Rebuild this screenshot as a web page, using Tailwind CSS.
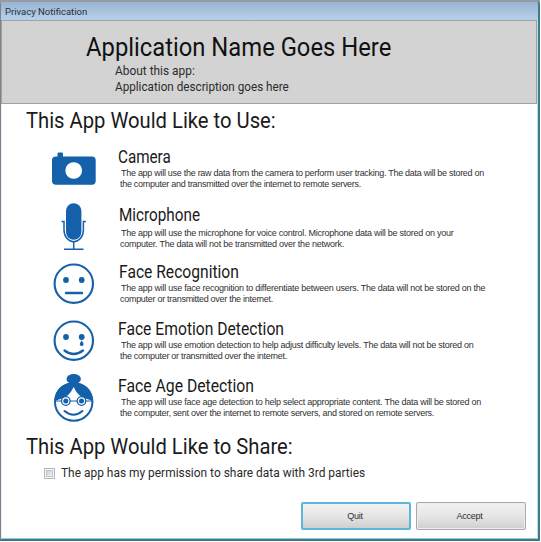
<!DOCTYPE html>
<html lang="en">
<head>
<meta charset="utf-8">
<title>Privacy Notification</title>
<script src="https://cdn.jsdelivr.net/npm/@tailwindcss/browser@4"></script>
</head>
<body class="w-[541px] h-[542px] overflow-hidden bg-white font-[Roboto,sans-serif] text-[#1a1a1a] whitespace-nowrap">
<div class="w-[540px] h-[541px] flex flex-col bg-[#9b9b9b]">
  <div class="h-px shrink-0"></div>
  <div class="flex-1 flex flex-col rounded-t-[4px] border-l border-r-2 border-b-2 border-l-[#7b848c] border-r-[#3f7c86] border-b-[#46757d] bg-[#b9d1ea] overflow-hidden">
    <div class="h-[19px] shrink-0 pl-1 border-t border-[#8d9aa8] bg-linear-to-b from-[#98b4d2] to-[#b8d0ea] text-[9.5px] leading-[19px] text-[#26303c]">Privacy Notification</div>
    <div class="flex-1 flex flex-col bg-white border-r border-b border-r-[#b5e3f4] border-b-[#7fd3e8] border-l border-l-[#e8eef4]">
      <header class="h-[84px] shrink-0 -ml-px border border-[#9fa1a3] bg-[#d3d3d3] pt-[11px] pl-[84px] flex flex-col items-start">
        <h1 class="text-[26px] leading-[30px] origin-left scale-x-[.915] text-[#111]">Application Name Goes Here</h1>
        <p class="ml-[29px] mt-px text-[13.3px] leading-[16px] origin-left scale-x-[.895] text-[#2b2b2b]">About this app:</p>
        <p class="ml-[29px] text-[13.3px] leading-[16px] origin-left scale-x-[.88] text-[#2b2b2b]">Application description goes here</p>
      </header>
      <h2 class="mt-[3px] ml-[24px] h-[26px] self-start text-[22.5px] leading-[26px] origin-left scale-x-[.898]">This App Would Like to Use:</h2>

      <section class="mt-[14px] ml-[50px] h-[57px] shrink-0 flex">
        <svg class="w-[66px] h-[57px] shrink-0" viewBox="0 0 66 57" fill="#1460aa"><path fill-rule="evenodd" d="M4 9.500H5.500V6.500Q5.500 5.500 6.500 5.500H10Q11 5.500 11 6.500V9.500H40Q43.700 9.500 43.700 13V34Q43.700 37.700 40 37.700H4Q0 37.700 0 34V13Q0 9.500 4 9.500ZM21.700 15.200a8.300 8.300 0 1 0 .01 0Z"/></svg>
        <div class="flex flex-col items-start">
          <h3 class="text-[17.5px] leading-[20px] origin-left scale-x-[.87]">Camera</h3>
          <p class="mt-[1px] pl-[3px] font-[Liberation_Sans,sans-serif] text-[9px] leading-[10.5px] text-[#303030] tracking-[-.281px]">The app will use the raw data from the camera to perform user tracking. The data will be stored on</p>
          <p class="pl-[2px] font-[Liberation_Sans,sans-serif] text-[9px] leading-[10.5px] text-[#303030] tracking-[-.287px]">the computer and transmitted over the internet to remote servers.</p>
        </div>
      </section>

      <section class="ml-[50px] h-[58px] shrink-0 flex">
        <svg class="w-[66px] h-[58px] shrink-0 overflow-visible" viewBox="0 1 66 58" fill="none" stroke="#1460aa"><rect x="14" y="0.300" width="15.400" height="36.500" rx="7.700" fill="#1460aa" stroke="none"/><path stroke-width="1.500" d="M9.500 18.500h2.500V27a9.700 11.700 0 0 0 19.400 0V18.500h2.500M21.700 38.700V46M12 46.300H31.500"/></svg>
        <div class="flex flex-col items-start">
          <h3 class="mt-[1px] ml-px text-[17.5px] leading-[20px] origin-left scale-x-[.873]">Microphone</h3>
          <p class="mt-[3px] pl-[3px] font-[Liberation_Sans,sans-serif] text-[9px] leading-[10.5px] text-[#303030] tracking-[-.256px]">The app will use the microphone for voice control. Microphone data will be stored on your</p>
          <p class="pl-[2px] font-[Liberation_Sans,sans-serif] text-[9px] leading-[10.5px] text-[#303030] tracking-[-.241px]">computer. The data will not be transmitted over the network.</p>
        </div>
      </section>

      <section class="ml-[50px] h-[57px] shrink-0 flex">
        <svg class="w-[66px] h-[57px] shrink-0" viewBox="0 0 66 57" fill="none" stroke="#1460aa"><circle cx="21.800" cy="21.700" r="19.200" stroke-width="2.100"/><g fill="#1460aa" stroke="none"><circle cx="14" cy="18" r="2.900"/><circle cx="29.700" cy="18" r="2.900"/></g><path d="M14 31H30" stroke-width="2.400" stroke-linecap="round"/></svg>
        <div class="flex flex-col items-start">
          <h3 class="ml-px text-[17.5px] leading-[20px] origin-left scale-x-[.893]">Face Recognition</h3>
          <p class="mt-[1px] pl-[3px] font-[Liberation_Sans,sans-serif] text-[9px] leading-[10.5px] text-[#303030] tracking-[-.251px]">The app will use face recognition to differentiate between users. The data will not be stored on the</p>
          <p class="pl-[2px] font-[Liberation_Sans,sans-serif] text-[9px] leading-[10.5px] text-[#303030] tracking-[-.288px]">computer or transmitted over the internet.</p>
        </div>
      </section>

      <section class="ml-[50px] h-[57px] shrink-0 flex">
        <svg class="w-[66px] h-[57px] shrink-0" viewBox="0 0 66 57" fill="none" stroke="#1460aa"><circle cx="21.800" cy="21.700" r="19.200" stroke-width="2.100"/><g fill="#1460aa" stroke="none"><circle cx="14" cy="18" r="2.900"/><circle cx="29.700" cy="18" r="2.900"/><path d="M29.700 21.500l1.600 2.600a1.900 1.900 0 1 1-3.200 0Z"/></g><path d="M12.500 31.500Q21.700 38.500 31 31.500" stroke-width="2.200" stroke-linecap="round"/></svg>
        <div class="flex flex-col items-start">
          <h3 class="text-[17.5px] leading-[20px] origin-left scale-x-[.895]">Face Emotion Detection</h3>
          <p class="mt-[1px] pl-[3px] font-[Liberation_Sans,sans-serif] text-[9px] leading-[10.5px] text-[#303030] tracking-[-.256px]">The app will use emotion detection to help adjust difficulty levels. The data will not be stored on</p>
          <p class="pl-[2px] font-[Liberation_Sans,sans-serif] text-[9px] leading-[10.5px] text-[#303030] tracking-[-.285px]">the computer or transmitted over the internet.</p>
        </div>
      </section>

      <section class="ml-[50px] h-[57px] shrink-0 flex">
        <svg class="w-[66px] h-[57px] shrink-0 overflow-visible" viewBox="0 -1 66 57" fill="none" stroke="#1460aa"><circle cx="21.700" cy="25" r="18.700" stroke-width="2"/><g fill="#1460aa" stroke="none"><ellipse cx="21.700" cy="2" rx="7.200" ry="5"/><path d="M2.500 24C3 12 11 5.500 21.700 5.500S40.500 12 41 24L35 22Q26 20 21.700 10Q17 20 8.500 22Z"/></g><circle cx="13.800" cy="24" r="4.300" fill="#fff" stroke-width="1.300"/><circle cx="29.500" cy="24" r="4.300" fill="#fff" stroke-width="1.300"/><g fill="#1460aa" stroke="none"><circle cx="13.800" cy="24" r="2.500"/><circle cx="29.500" cy="24" r="2.500"/></g><path d="M18.100 24h7.100M3 24h6.500M33.800 24H40.500" stroke-width="1"/><path d="M12.500 34Q21.700 41.500 30.500 34" stroke-width="2" stroke-linecap="round"/></svg>
        <div class="flex flex-col items-start">
          <h3 class="text-[17.5px] leading-[20px] origin-left scale-x-[.9]">Face Age Detection</h3>
          <p class="mt-[1px] pl-[3px] font-[Liberation_Sans,sans-serif] text-[9px] leading-[10.5px] text-[#303030] tracking-[-.251px]">The app will use face age detection to help select appropriate content. The data will be stored on</p>
          <p class="pl-[2px] font-[Liberation_Sans,sans-serif] text-[9px] leading-[10.5px] text-[#303030] tracking-[-.296px]">the computer, sent over the internet to remote servers, and stored on remote servers.</p>
        </div>
      </section>

      <h2 class="mt-0 ml-[24px] h-[26px] self-start text-[22.5px] leading-[26px] origin-left scale-x-[.897]">This App Would Like to Share:</h2>
      <label class="mt-[6px] ml-[42px] h-[16px] flex items-center">
        <span class="size-[11px] shrink-0 border border-[#b4b7ba] bg-[#f5f5f5] p-px"><span class="block size-full border border-[#c3c8ce] bg-linear-to-br from-[#cbcfd5] to-[#f3f3f3]"></span></span>
        <span class="ml-[6px] text-[13px] leading-[16px] origin-left scale-x-[.918] text-[#2b2b2b]">The app has my permission to share data with 3rd parties</span>
      </label>
      <div class="mt-auto mb-[8px] mr-[11px] flex justify-end gap-[5px] font-[Liberation_Sans,sans-serif] text-[9px] tracking-[-.25px] text-[#303030]">
        <button class="w-[110px] h-[28px] rounded-[2px] border-2 border-[#5fb6dc] bg-linear-to-b from-[#f2f2f2] from-0% via-[#e6e6e6] via-50% to-[#cfcfcf] to-100% pr-[2px] pt-px">Quit</button>
        <button class="w-[110px] h-[28px] rounded-[2px] border border-[#a9a9a9] bg-linear-to-b from-[#f2f2f2] from-0% via-[#e6e6e6] via-50% to-[#cfcfcf] to-100% shadow-[inset_0_0_0_1px_#ededed] pr-[3px] pt-px">Accept</button>
      </div>
    </div>
  </div>
</div>
</body>
</html>
